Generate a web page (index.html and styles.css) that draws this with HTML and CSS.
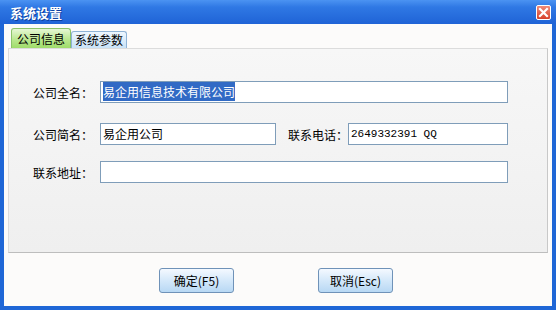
FILE: index.html
```html
<!DOCTYPE html>
<html lang="zh-CN">
<head>
  <meta charset="UTF-8">
  <title>系统设置</title>
  <link rel="stylesheet" href="styles.css">
</head>
<body>
  <div class="window">
    <div class="titlebar">
      <span class="title">系统设置</span>
      <span class="close-btn">
        <svg width="11" height="11" viewBox="0 0 11 11">
          <path d="M2 2 L9 9 M9 2 L2 9" stroke="#fff" stroke-width="2.2" stroke-linecap="square"/>
        </svg>
      </span>
    </div>

    <div class="content">
      <!-- Tabs -->
      <div class="tabs">
        <div class="tab active">公司信息</div>
        <div class="tab">系统参数</div>
      </div>

      <div class="panel">
        <div class="form-row">
          <label class="label">公司全名：</label>
          <div class="field wide"><span class="selected">易企用信息技术有限公司</span></div>
        </div>
        <div class="form-row">
          <label class="label">公司简名：</label>
          <div class="field short">易企用公司</div>
          <label class="label label-phone">联系电话：</label>
          <div class="field phone mono">2649332391 QQ</div>
        </div>
        <div class="form-row">
          <label class="label">联系地址：</label>
          <div class="field wide"></div>
        </div>
      </div>

      <div class="dialog-buttons">
        <button class="btn">确定(F5)</button>
        <button class="btn">取消(Esc)</button>
      </div>
    </div>
  </div>
</body>
</html>
```

FILE: styles.css
```css
/* General styles */
body {
  margin: 0;
  padding: 0;
  font-family: "Noto Sans CJK SC", "Liberation Sans", sans-serif;
  font-size: 12px;
  color: #000;
}
.window {
  width: 556px;
  height: 310px;
  box-sizing: border-box;
  display: flex;
  flex-direction: column;
  background-color: #1f66d6;
  padding: 0 4px 4px 4px;
}

/* Title bar */
.titlebar {
  height: 24px;
  display: flex;
  align-items: center;
  justify-content: space-between;
  margin: 0 -4px;
  padding: 0 5px 0 10px;
  background: linear-gradient(#4b93f2 0%, #2f78e4 30%, #1f63d6 100%);
}
.title {
  color: white;
  font-weight: bold;
  font-size: 13px;
  text-shadow: 1px 1px 0 #0b3e9e;
}
.close-btn {
  width: 15px;
  height: 15px;
  display: flex;
  align-items: center;
  justify-content: center;
  background: linear-gradient(#f08a78, #d6402a);
  border: 1px solid #fff;
  border-radius: 2px;
  box-sizing: border-box;
}

/* Dialog content */
.content {
  flex: 1;
  background-color: #fcfbfa;
  padding: 4px 4px 0 4px;
  display: flex;
  flex-direction: column;
}
.tabs {
  display: flex;
  align-items: flex-end;
  height: 20px;
  padding-left: 3px;
}
.tab {
  height: 17px;
  line-height: 16px;
  padding: 0 3px;
  border: 1px solid #8fb3d6;
  border-bottom: none;
  border-radius: 3px 3px 0 0;
  background: linear-gradient(#eef7ff, #c9e2f7);
  box-sizing: border-box;
}
.tab.active {
  height: 20px;
  line-height: 19px;
  padding: 0 5px;
  border-color: #8cc46a;
  background: linear-gradient(#e6f7d4, #b6e68a 60%, #9fdc6a);
}
.panel {
  height: 205px;
  box-sizing: border-box;
  background: linear-gradient(#f7f7f7, #efefef);
  border: 1px solid #dcdcdc;
  border-right-color: #c8c8c8;
  border-bottom-color: #bdbdbd;
  padding: 32px 0 0 24px;
  display: flex;
  flex-direction: column;
  gap: 20px;
}
.form-row {
  display: flex;
  align-items: center;
}
.form-row + .form-row + .form-row {
  margin-top: -4px;
}
.label {
  width: 67px;
  flex: none;
  white-space: nowrap;
}
.label-phone {
  width: 60px;
  margin-left: 12px;
}
.field {
  height: 22px;
  line-height: 20px;
  box-sizing: border-box;
  border: 1px solid #7f9db9;
  background-color: white;
  padding: 0 2px;
  white-space: nowrap;
}
.field.wide {
  width: 408px;
}
.field.short {
  width: 176px;
}
.field.phone {
  width: 160px;
}
.mono {
  font-family: "Liberation Mono", monospace;
  font-size: 11px;
}
.selected {
  background-color: #316ac5;
  color: white;
  padding: 1px 0;
}

/* Buttons */
.dialog-buttons {
  display: flex;
  justify-content: center;
  gap: 84px;
  margin-top: 15px;
  padding-right: 4px;
}
.btn {
  width: 75px;
  height: 25px;
  font-family: "Noto Sans CJK SC", "Liberation Sans", sans-serif;
  font-size: 12px;
  border: 1px solid #6f92b8;
  border-radius: 3px;
  background: linear-gradient(#f4f9ff, #d4e8fa 50%, #b8d8f4);
  padding: 0;
}
```
